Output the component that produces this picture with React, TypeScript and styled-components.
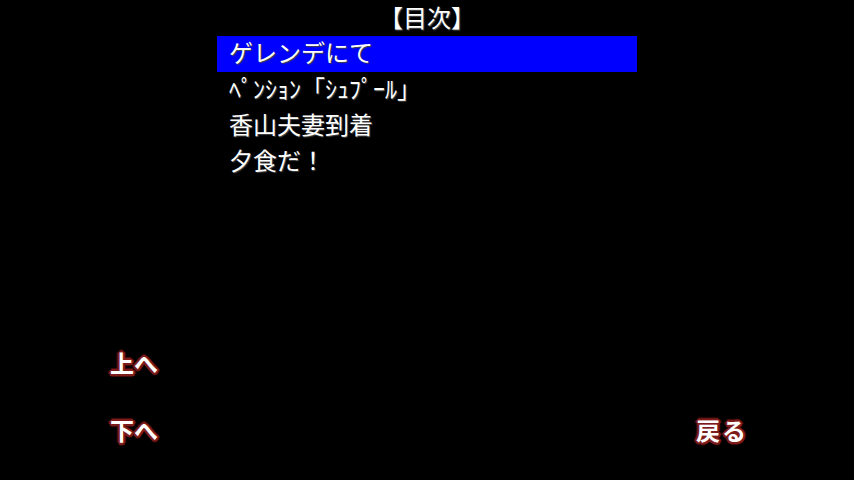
import React from "react";
import styled, { createGlobalStyle } from "styled-components";

const Global = createGlobalStyle`
  html, body { margin: 0; padding: 0; background: #000; }
  body { font-family: "Noto Sans CJK JP", "Noto Sans", sans-serif; }
`;

const Screen = styled.div`
  width: 854px;
  height: 480px;
  background: #000;
  display: flex;
  flex-direction: column;
  overflow: hidden;
  color: #fff;
`;

const Title = styled.div`
  height: 36px;
  display: flex;
  align-items: flex-start;
  justify-content: center;
  padding-top: 1px;
  font-size: 24px;
  line-height: 32px;
  box-sizing: border-box;
  text-shadow: 1px 1px 1px #555;
`;

const List = styled.div`
  width: 420px;
  margin-left: 217px;
  display: flex;
  flex-direction: column;
`;

const Item = styled.div<{ $active?: boolean }>`
  height: 36px;
  display: flex;
  align-items: center;
  padding-left: 12px;
  padding-bottom: 4px;
  box-sizing: border-box;
  font-size: 24px;
  line-height: 30px;
  white-space: pre;
  background: ${(p) => (p.$active ? "#0000ff" : "transparent")};
  text-shadow: 1px 1px 1px #444;
`;

const Spacer = styled.div`
  flex: 1;
`;

const Footer = styled.div`
  display: flex;
  justify-content: space-between;
  align-items: flex-end;
  padding: 0 106px 35px 110px;
`;

const Column = styled.div`
  display: flex;
  flex-direction: column;
  gap: 37px;
`;

const Button = styled.div<{ $spacing?: number }>`
  font-size: 24px;
  line-height: 30px;
  font-weight: bold;
  color: #fff;
  letter-spacing: ${(p) => p.$spacing ?? 0}px;
  text-shadow:
    2px 0 0 #7e1c1c, -2px 0 0 #7e1c1c, 0 2px 0 #7e1c1c, 0 -2px 0 #7e1c1c,
    1.5px 1.5px 0 #7e1c1c, -1.5px 1.5px 0 #7e1c1c, 1.5px -1.5px 0 #7e1c1c, -1.5px -1.5px 0 #7e1c1c,
    3px 0 1px #4a0c0c, -3px 0 1px #4a0c0c, 0 3px 1px #4a0c0c, 0 -3px 1px #4a0c0c;
`;

const items = [
  "ゲレンデにて",
  "ﾍﾟﾝｼｮﾝ\u2002｢ｼｭﾌﾟｰﾙ｣",
  "香山夫妻到着",
  "夕食だ！",
];

export default function App() {
  return (
    <>
      <Global />
      <Screen>
        <Title>【目次】</Title>
        <List>
          {items.map((t, i) => (
            <Item key={i} $active={i === 0}>
              {t}
            </Item>
          ))}
        </List>
        <Spacer />
        <Footer>
          <Column>
            <Button>上へ</Button>
            <Button>下へ</Button>
          </Column>
          <Button $spacing={2}>戻る</Button>
        </Footer>
      </Screen>
    </>
  );
}
